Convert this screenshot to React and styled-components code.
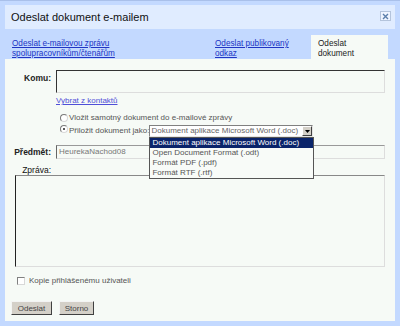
import React from 'react';
import styled, { createGlobalStyle } from 'styled-components';

const GlobalStyle = createGlobalStyle`
  body {
    margin: 0;
    font-family: "Liberation Sans", Arial, sans-serif;
  }
`;

const Frame = styled.div`
  width: 400px;
  height: 326px;
  box-sizing: border-box;
  padding: 5px;
  background: #c3d9ff;
  border-top: 1px solid #a9c0ea;
  padding-top: 4px;
`;

const Dialog = styled.div`
  height: 316px;
  display: flex;
  flex-direction: column;
  background: #f6faf6;
`;

const TitleBar = styled.div`
  height: 24px;
  flex: none;
  display: flex;
  justify-content: space-between;
  align-items: center;
  padding: 0 4px 0 6px;
  background: #e0ecff;
`;

const Title = styled.div`
  font-size: 11px;
  color: #111;
`;

const CloseButton = styled.div`
  width: 11px;
  height: 10px;
  box-sizing: border-box;
  align-self: flex-start;
  margin-top: 6px;
  border: 1px solid #b4c4dc;
  background: #eef4ff;
  display: flex;
  align-items: center;
  justify-content: center;
`;

const TabBar = styled.div`
  height: 30px;
  flex: none;
  display: flex;
  align-items: flex-end;
  padding-left: 7px;
  background: #c3d9ff;
`;

const Tab = styled.div`
  width: ${p => p.$width}px;
  flex: none;
  font-size: 8.2px;
  line-height: 10px;
`;

const TabLink = styled.a`
  color: #2035c4;
  text-decoration: underline;
`;

const ActiveTab = styled.div`
  width: 77px;
  height: 24px;
  box-sizing: border-box;
  padding: 4px 0 0 7px;
  flex: none;
  background: #f6faf6;
  font-size: 8.2px;
  line-height: 10px;
  color: #222;
`;

const Body = styled.div`
  flex: 1;
  display: flex;
  flex-direction: column;
  padding: 11px 10px 0 6px;
  font-size: 8px;
  line-height: 10px;
  color: #555;
`;

const FieldRow = styled.div`
  display: flex;
  gap: 5px;
  margin-top: ${p => p.$top || 0}px;
`;

const Label = styled.div`
  width: 40px;
  flex: none;
  text-align: right;
  font-weight: bold;
  font-size: 8.5px;
  color: #222;
  padding-top: ${p => p.$pad || 0}px;
`;

const TextBox = styled.div`
  flex: 1;
  height: ${p => p.$height}px;
  box-sizing: border-box;
  border-top: 1px solid ${p => (p.$dark ? '#333' : '#999')};
  border-left: 1px solid ${p => (p.$dark ? '#333' : '#666')};
  border-right: 1px solid #ddd;
  border-bottom: 1px solid #ddd;
  padding-left: 2px;
  color: #777;
  line-height: ${p => p.$height - 2}px;
`;

const LinkRow = styled.div`
  margin: 3px 0 0 45px;
`;

const ContactLink = styled.a`
  color: #4f4fd8;
  text-decoration: underline;
`;

const OptionRow = styled.div`
  display: flex;
  align-items: center;
  margin: ${p => p.$top}px 0 0 49px;
  min-height: 11px;
`;

const Radio = styled.span`
  width: 8px;
  height: 8px;
  box-sizing: border-box;
  flex: none;
  border-radius: 50%;
  border: 1px solid #7a7a7a;
  border-right-color: #d8d8d8;
  border-bottom-color: #d8d8d8;
  background: #fff;
  margin-right: 1px;
  align-self: ${p => (p.$top ? 'flex-start' : 'center')};
  display: flex;
  align-items: center;
  justify-content: center;

  &::after {
    content: '';
    width: 2px;
    height: 2px;
    border-radius: 50%;
    background: ${p => (p.$checked ? '#222' : 'transparent')};
  }
`;

const SelectWrap = styled.div`
  position: relative;
`;

const SelectBox = styled.div`
  width: 164px;
  height: 12px;
  box-sizing: border-box;
  display: flex;
  align-items: center;
  justify-content: space-between;
  border-top: 1px solid #808080;
  border-left: 1px solid #808080;
  border-right: 1px solid #e4e4e4;
  border-bottom: 1px solid #e4e4e4;
  background: #fff;
  padding-left: 1px;
  color: #666;
  white-space: nowrap;
`;

const ArrowButton = styled.span`
  width: 10px;
  height: 10px;
  box-sizing: border-box;
  flex: none;
  background: #d4d0c8;
  border-top: 1px solid #fff;
  border-left: 1px solid #fff;
  border-right: 1px solid #404040;
  border-bottom: 1px solid #404040;
  display: flex;
  align-items: center;
  justify-content: center;
`;

const DropList = styled.div`
  position: absolute;
  top: 12px;
  left: 0;
  width: 165px;
  box-sizing: border-box;
  border: 1px solid #555;
  background: #f8fbf8;
  z-index: 2;
`;

const Option = styled.div`
  height: 10px;
  line-height: 10px;
  padding-left: 2px;
  white-space: nowrap;
  background: ${p => (p.$selected ? '#0a246a' : 'transparent')};
  color: ${p => (p.$selected ? '#fff' : '#555')};
`;

const MessageLabel = styled(Label)`
  margin-top: 6px;
  height: 10px;
  font-weight: normal;
  color: #111;
`;

const MessageBox = styled.div`
  height: 92px;
  margin-left: 4px;
  box-sizing: border-box;
  border-top: 1px solid #888;
  border-left: 1px solid #222;
  border-right: 1px solid #ddd;
  border-bottom: 1px solid #ddd;
`;

const CheckRow = styled.div`
  display: flex;
  align-items: center;
  gap: 4px;
  margin: 9px 0 0 6px;
  height: 10px;
`;

const CheckBox = styled.span`
  width: 8px;
  height: 8px;
  box-sizing: border-box;
  border-top: 1px solid #808080;
  border-left: 1px solid #808080;
  border-right: 1px solid #d8d8d8;
  border-bottom: 1px solid #d8d8d8;
  background: #fff;
`;

const ButtonRow = styled.div`
  display: flex;
  gap: 7px;
  margin-top: 15px;
`;

const Button = styled.button`
  width: ${p => p.$width}px;
  height: 14px;
  box-sizing: border-box;
  padding: 0;
  font-family: inherit;
  font-size: 8px;
  color: #444;
  background: #d4d0c8;
  border-top: 1px solid #f4f4f4;
  border-left: 1px solid #f4f4f4;
  border-right: 1px solid #404040;
  border-bottom: 1px solid #404040;
`;

const formats = [
  'Dokument aplikace Microsoft Word (.doc)',
  'Open Document Format (.odt)',
  'Formát PDF (.pdf)',
  'Formát RTF (.rtf)',
];

export default function App() {
  return (
    <>
      <GlobalStyle />
      <Frame>
        <Dialog>
          <TitleBar>
            <Title>Odeslat dokument e-mailem</Title>
            <CloseButton>
              <svg width="7" height="7" viewBox="0 0 7 7">
                <path d="M1 1 L6 6 M6 1 L1 6" stroke="#5b7eaa" strokeWidth="1.4" />
              </svg>
            </CloseButton>
          </TitleBar>
          <TabBar>
            <Tab $width={203}>
              <TabLink>Odeslat e-mailovou zprávu<br />spolupracovníkům/čtenářům</TabLink>
            </Tab>
            <Tab $width={96}>
              <TabLink>Odeslat publikovaný<br />odkaz</TabLink>
            </Tab>
            <ActiveTab>Odeslat<br />dokument</ActiveTab>
          </TabBar>
          <Body>
            <FieldRow>
              <Label $pad={3}>Komu:</Label>
              <TextBox $height={23} $dark />
            </FieldRow>
            <LinkRow>
              <ContactLink>Vybrat z kontaktů</ContactLink>
            </LinkRow>
            <OptionRow $top={6}>
              <Radio />
              Vložit samotný dokument do e-mailové zprávy
            </OptionRow>
            <OptionRow $top={2}>
              <Radio $checked $top />
              Přiložit dokument jako:
              <SelectWrap>
                <SelectBox>
                  {formats[0]}
                  <ArrowButton>
                    <svg width="5" height="3" viewBox="0 0 5 3">
                      <polygon points="0,0 5,0 2.5,3" fill="#000" />
                    </svg>
                  </ArrowButton>
                </SelectBox>
                <DropList>
                  {formats.map((f, i) => (
                    <Option key={f} $selected={i === 0}>{f}</Option>
                  ))}
                </DropList>
              </SelectWrap>
            </OptionRow>
            <FieldRow $top={8}>
              <Label $pad={2}>Předmět:</Label>
              <TextBox $height={14}>HeurekaNachod08</TextBox>
            </FieldRow>
            <MessageLabel>Zpráva:</MessageLabel>
            <MessageBox />
            <CheckRow>
              <CheckBox />
              Kopie přihlášenému uživateli
            </CheckRow>
            <ButtonRow>
              <Button $width={41}>Odeslat</Button>
              <Button $width={35}>Storno</Button>
            </ButtonRow>
          </Body>
        </Dialog>
      </Frame>
    </>
  );
}
